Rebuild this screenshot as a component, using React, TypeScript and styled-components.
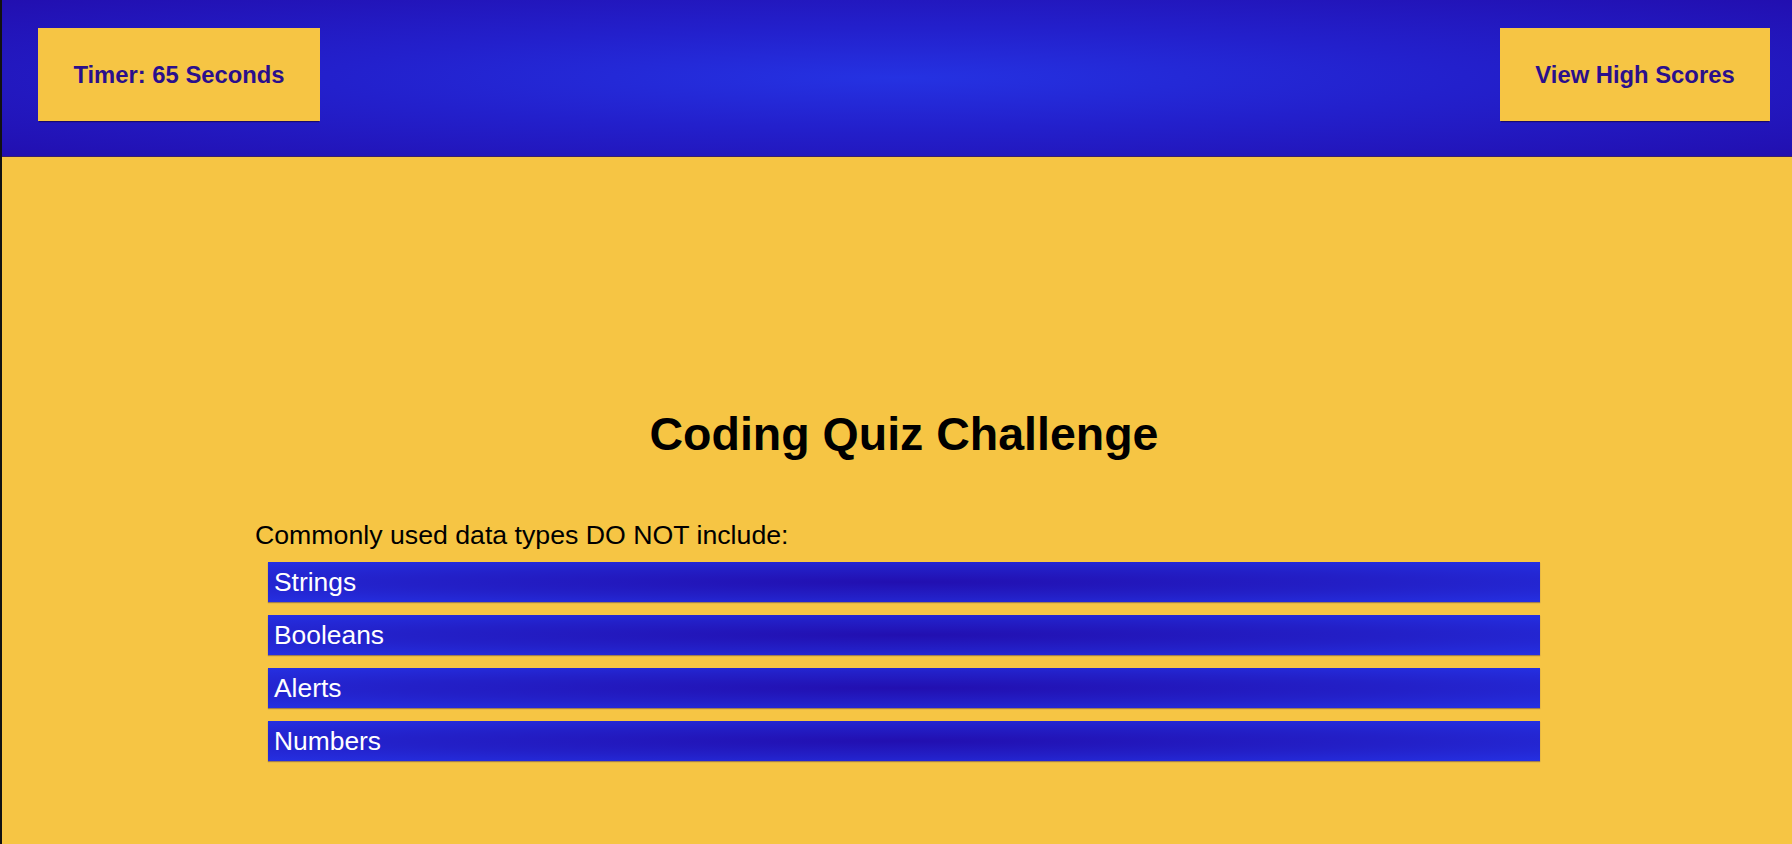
import React from "react";
import styled, { createGlobalStyle } from "styled-components";

const GlobalStyle = createGlobalStyle`
  html, body {
    margin: 0;
    padding: 0;
    background: #f6c544;
  }
  body {
    font-family: "Liberation Sans", Arial, Helvetica, sans-serif;
  }
  * { box-sizing: border-box; }
`;

const Page = styled.div`
  min-height: 844px;
  background: #f6c544;
  border-left: 2px solid #111;
  display: flex;
  flex-direction: column;
`;

const Header = styled.header`
  height: 157px;
  display: flex;
  justify-content: space-between;
  align-items: flex-start;
  padding: 28px 22px 0 36px;
  background: radial-gradient(ellipse at center, #2532e2 0%, #2320cc 45%, #220fb0 100%);
  border-bottom: 1px solid #3a1f6a;
`;

const HeaderButton = styled.button<{ $width: number }>`
  width: ${(p) => p.$width}px;
  height: 93px;
  border: none;
  margin: 0;
  padding: 0;
  background: #f6c544;
  color: #2a0f8c;
  font-family: "Liberation Sans", Arial, Helvetica, sans-serif;
  font-weight: 700;
  font-size: 23.8px;
  box-shadow: 0 2px 1px -1px rgba(20, 0, 60, 0.6);
  cursor: pointer;
`;

const Main = styled.main`
  display: flex;
  justify-content: flex-start;
  padding: 251px 0 0 253px;
`;

const Quiz = styled.section`
  width: 1298px;
  display: flex;
  flex-direction: column;
`;

const Title = styled.h1`
  margin: 0;
  text-align: center;
  font-size: 46.5px;
  line-height: 53px;
  font-weight: 700;
  color: #000;
`;

const Question = styled.p`
  margin: 59px 0 0 0;
  font-size: 26.7px;
  line-height: 31px;
  color: #000;
`;

const Choices = styled.ol`
  list-style: none;
  margin: 11px 0 0 0;
  padding: 0 13px;
  display: flex;
  flex-direction: column;
  gap: 13px;
`;

const Choice = styled.li`
  height: 40px;
  display: flex;
  align-items: center;
  padding-left: 6px;
  font-size: 26.4px;
  color: #fff;
  background: radial-gradient(ellipse at center, #220fb0 0%, #2320c8 55%, #2530e2 100%);
  box-shadow: 0 1px 1px rgba(60, 40, 90, 0.45);
  cursor: pointer;
`;

const choices = ["Strings", "Booleans", "Alerts", "Numbers"];

export default function App() {
  return (
    <>
      <GlobalStyle />
      <Page>
        <Header>
          <HeaderButton $width={282}>Timer: 65 Seconds</HeaderButton>
          <HeaderButton $width={270}>View High Scores</HeaderButton>
        </Header>
        <Main>
          <Quiz>
            <Title>Coding Quiz Challenge</Title>
            <Question>Commonly used data types DO NOT include:</Question>
            <Choices>
              {choices.map((c) => (
                <Choice key={c}>{c}</Choice>
              ))}
            </Choices>
          </Quiz>
        </Main>
      </Page>
    </>
  );
}
